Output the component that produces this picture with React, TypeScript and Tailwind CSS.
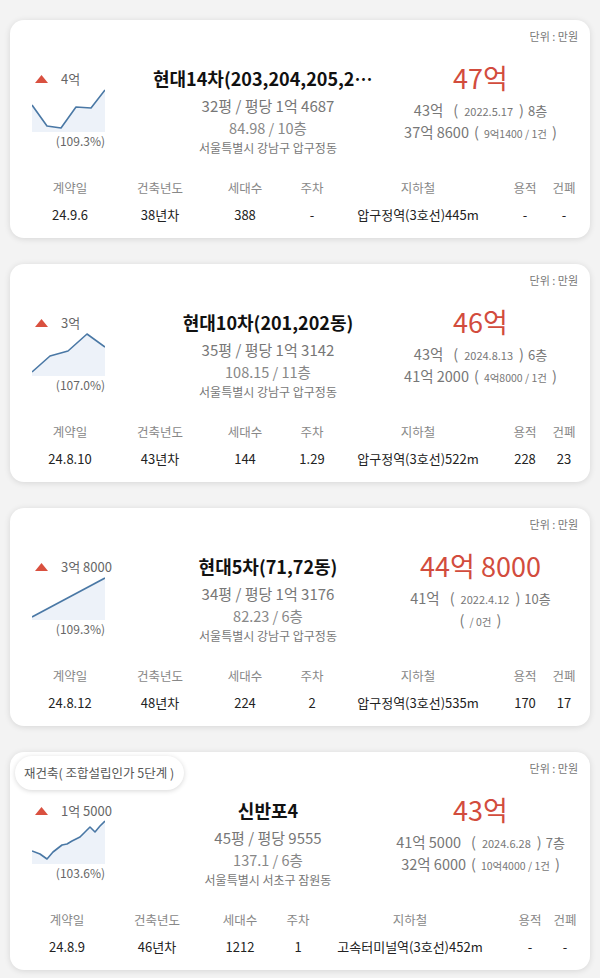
import React from 'react';

type Deal = {
    badge?: string;
    delta: string;
    rate: string;
    points: string;
    title: string;
    size: string;
    area: string;
    address: string;
    price: string;
    prev: string;
    prevDate: string;
    prevFloor: string;
    low: string;
    lowNote: string;
    cols: string;
    row: string[];
};

const deals: Deal[] = [
    {
        delta: '4억',
        rate: '(109.3%)',
        points: '0,17 15,38 29,40 44,19 59,20 73,2',
        title: '현대14차(203,204,205,206동)',
        size: '32평 / 평당 1억 4687',
        area: '84.98 / 10층',
        address: '서울특별시 강남구 압구정동',
        price: '47억',
        prev: '43억',
        prevDate: '2022.5.17',
        prevFloor: '8층',
        low: '37억 8600',
        lowNote: '9억1400 / 1건',
        cols: 'grid-cols-[96px_84px_86px_48px_164px_50px_28px]',
        row: ['24.9.6', '38년차', '388', '-', '압구정역(3호선)445m', '-', '-'],
    },
    {
        delta: '3억',
        rate: '(107.0%)',
        points: '0,40 18,24 36,19 55,2 73,15',
        title: '현대10차(201,202동)',
        size: '35평 / 평당 1억 3142',
        area: '108.15 / 11층',
        address: '서울특별시 강남구 압구정동',
        price: '46억',
        prev: '43억',
        prevDate: '2024.8.13',
        prevFloor: '6층',
        low: '41억 2000',
        lowNote: '4억8000 / 1건',
        cols: 'grid-cols-[96px_84px_86px_48px_164px_50px_28px]',
        row: ['24.8.10', '43년차', '144', '1.29', '압구정역(3호선)522m', '228', '23'],
    },
    {
        delta: '3억 8000',
        rate: '(109.3%)',
        points: '0,41 73,2',
        title: '현대5차(71,72동)',
        size: '34평 / 평당 1억 3176',
        area: '82.23 / 6층',
        address: '서울특별시 강남구 압구정동',
        price: '44억 8000',
        prev: '41억',
        prevDate: '2022.4.12',
        prevFloor: '10층',
        low: '',
        lowNote: '/ 0건',
        cols: 'grid-cols-[96px_84px_86px_48px_164px_50px_28px]',
        row: ['24.8.12', '48년차', '224', '2', '압구정역(3호선)535m', '170', '17'],
    },
    {
        badge: '재건축( 조합설립인가 5단계 )',
        delta: '1억 5000',
        rate: '(103.6%)',
        points: '0,31 8,34 15,39 21,32 30,25 35,24 40,21 48,17 58,7 63,12 68,6 73,1',
        title: '신반포4',
        size: '45평 / 평당 9555',
        area: '137.1 / 6층',
        address: '서울특별시 서초구 잠원동',
        price: '43억',
        prev: '41억 5000',
        prevDate: '2024.6.28',
        prevFloor: '7층',
        low: '32억 6000',
        lowNote: '10억4000 / 1건',
        cols: 'grid-cols-[90px_90px_76px_40px_184px_56px_14px]',
        row: ['24.8.9', '46년차', '1212', '1', '고속터미널역(3호선)452m', '-', '-'],
    },
];

const labels = ['계약일', '건축년도', '세대수', '주차', '지하철', '용적', '건폐'];

function Sparkline({ points }: { points: string }) {
    const area = `0,44 ${points} 73,44`;
    return (
        <svg width="73" height="44" viewBox="0 0 73 44" className="block">
            <polygon points={area} fill="#edf2f9" />
            <polyline points={points} fill="none" stroke="#4a78a5" strokeWidth="1.6" strokeLinejoin="round" />
        </svg>
    );
}

function DealCard({ d }: { d: Deal }) {
    return (
        <div className="relative flex h-[218px] flex-col rounded-[14px] bg-white px-3 shadow-[0_1px_6px_rgba(0,0,0,0.12)]">
            {/* Badge */}
            {d.badge && (
                <div className="absolute left-[5px] top-[4px] flex h-[34px] items-center rounded-full bg-white pl-[9px] pr-[10px] text-[12.5px] text-[#555] shadow-[0_1px_5px_rgba(0,0,0,0.16)]">
                    {d.badge}
                </div>
            )}

            {/* Unit */}
            <div className="h-[34px] pt-[8px] text-right text-[11px] leading-[16px] text-[#777]">단위 : 만원</div>

            {/* Main */}
            <div className="flex h-[124px]">
                <div className="w-[131px] shrink-0">
                    <div className="mt-[16px] flex h-[18px] items-center">
                        <svg width="13" height="8" viewBox="0 0 13 8" className="ml-[13px]">
                            <polygon points="6.5,0 13,8 0,8" fill="#d9503f" />
                        </svg>
                        <span className="ml-[13px] text-[13px] text-[#666]">{d.delta}</span>
                    </div>
                    <div className="ml-[10px]">
                        <Sparkline points={d.points} />
                    </div>
                    <div className="mt-[1px] w-[83px] text-right text-[12px] leading-[16px] text-[#666]">{d.rate}</div>
                </div>

                <div className="flex w-[230px] shrink-0 flex-col items-center">
                    <div className="mt-[12px] w-full truncate text-center text-[18px] font-bold leading-[24px] text-[#111]">{d.title}</div>
                    <div className="mt-[4px] text-[15px] leading-[24px] text-[#777]">{d.size}</div>
                    <div className="text-[14.5px] leading-[20px] text-[#888]">{d.area}</div>
                    <div className="text-[12px] leading-[20px] text-[#777]">{d.address}</div>
                </div>

                <div className="flex flex-1 flex-col items-center">
                    <div className="mt-[8px] text-[27px] leading-[32px] text-[#d24c3d]">{d.price}</div>
                    <div className="mt-[6px] flex items-baseline text-[14.5px] leading-[20px] text-[#777]">
                        <span>{d.prev}</span>
                        <span className="ml-[10px]">(</span>
                        <span className="mx-[6px] text-[11px]">{d.prevDate}</span>
                        <span>)</span>
                        <span className="ml-[4px] text-[13px]">{d.prevFloor}</span>
                    </div>
                    <div className="flex items-baseline text-[14.5px] leading-[22px] text-[#777]">
                        {d.low && <span className="mr-[5px]">{d.low}</span>}
                        <span>(</span>
                        <span className="mx-[5px] text-[10.5px]">{d.lowNote}</span>
                        <span>)</span>
                    </div>
                </div>
            </div>

            {/* Table */}
            <div className={`grid ${d.cols} justify-items-center`}>
                {labels.map((l) => (
                    <div key={l} className="whitespace-nowrap text-[12.5px] leading-[20px] text-[#888]">{l}</div>
                ))}
                {d.row.map((v, i) => (
                    <div key={i} className="mt-[7px] whitespace-nowrap text-[13px] leading-[20px] text-[#222]">{v}</div>
                ))}
            </div>
        </div>
    );
}

export default function App() {
    return (
        <div className="min-h-[978px] bg-[#f3f3f3] px-[10px] pt-[20px] font-['Noto_Sans_CJK_KR',sans-serif]">
            <div className="flex flex-col gap-[26px]">
                {deals.map((d) => (
                    <DealCard key={d.title} d={d} />
                ))}
            </div>
        </div>
    );
}
